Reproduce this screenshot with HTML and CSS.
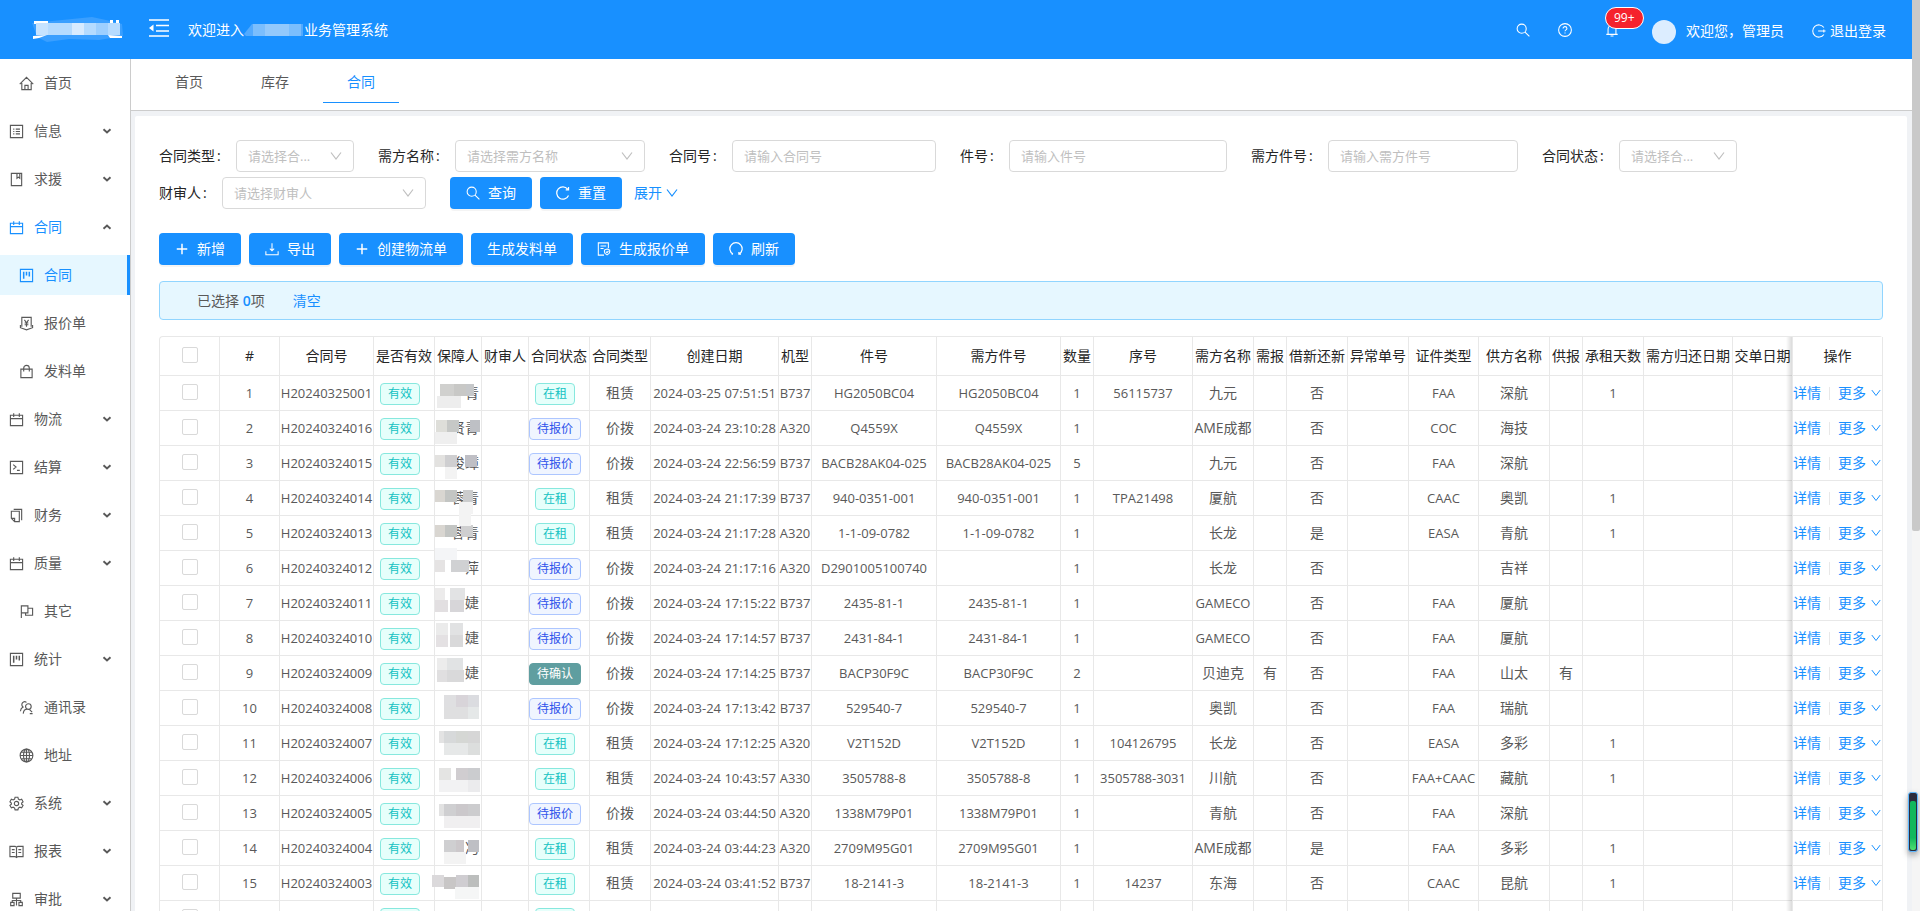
FILE: index.html
```html
<!DOCTYPE html>
<html lang="zh-CN">
<head>
<meta charset="utf-8">
<title>合同 - 业务管理系统</title>
<link rel="stylesheet" href="styles.css">
</head>
<body>
<svg class="sprite" aria-hidden="true">
  <symbol id="home" viewBox="0 0 16 16"><path d="M.8 8.700 8 1.500l7.200 7.200M3 7.500v7h10v-7M6.300 14.500V10h3.400v4.500"/></symbol>
  <symbol id="profile" viewBox="0 0 16 16"><path d="M1.500 1.500h13v13h-13zM4.500 5.500h1.200M4.500 8h1.200M4.500 10.500h1.200M7.200 5.500h4.500M7.200 8h4.500M7.200 10.500h4.500"/></symbol>
  <symbol id="book" viewBox="0 0 16 16"><path d="M2.500 1.500h11v13h-11zM8.500 1.500v5.200l1.500-1.200 1.500 1.200V1.500"/></symbol>
  <symbol id="calendar" viewBox="0 0 16 16"><path d="M1.500 3.500h13v11h-13zM1.500 7h13M5 1.200v4M11 1.200v4"/></symbol>
  <symbol id="project" viewBox="0 0 16 16"><path d="M1.500 1.500h13v13h-13z"/><path stroke-width="1.600" d="M5 4v7.500M8 4v4M11 4v5"/></symbol>
  <symbol id="quote" viewBox="0 0 16 16"><path d="M3 11.500v-10h10v10M1.500 9.500v3L8 14.800l6.500-2.300v-3M5.800 4.200 8 7.200l2.200-3M8 7.200V11.500M6 7.500h4M6 9.300h4"/></symbol>
  <symbol id="bag" viewBox="0 0 16 16"><path d="M2 5.500h12v9H2zM5 8V4.500a3 3 0 0 1 6 0V8"/></symbol>
  <symbol id="code" viewBox="0 0 16 16"><path d="M1.500 1.500h13v13h-13zM4.500 5l3 2.500-3 2.500M8.500 11h3"/></symbol>
  <symbol id="copy" viewBox="0 0 16 16"><path d="M2.500 3.500h8.500v11H6L2.500 11zM2.500 11H6v3.500M5 1.500h8.500V13"/></symbol>
  <symbol id="flag" viewBox="0 0 16 16"><path d="M2.500 15V2h7v7.500h-7M9.500 4.500h5V12H7V9.500"/></symbol>
  <symbol id="contacts" viewBox="0 0 16 16"><circle cx="10" cy="7" r="3"/><path d="M4.500 14.500c.3-3 2-4.700 4-4.800M1.500 12c.2-2.200 1-3.700 2.800-4.500A3 3 0 1 1 8 2.500M11 10l3 3M11.500 14.500h3"/></symbol>
  <symbol id="globe" viewBox="0 0 16 16"><circle cx="8" cy="8" r="6.800"/><ellipse cx="8" cy="8" rx="3.200" ry="6.800"/><path d="M1.200 8h13.600M8 1.200v13.600M2.500 4.500h11M2.500 11.500h11"/></symbol>
  <symbol id="gear" viewBox="0 0 16 16"><circle cx="8" cy="8" r="2.300"/><path d="m6.500 1.300-.5 2-1.500.9-2-.7L1 6.200l1.500 1.300v1.300L1 10.100l1.500 2.500 2-.7 1.500.9.500 2h3l.5-2 1.500-.9 2 .7 1.500-2.500-1.500-1.300V7.500L15 6.200l-1.500-2.700-2 .7-1.500-.9-.5-2z"/></symbol>
  <symbol id="read" viewBox="0 0 16 16"><path d="M1 2.500h5.500L8 3.500l1.500-1H15v11H9.500l-1.500 1-1.500-1H1zM8 3.500v11M3 6h3M3 9h3M10 6h3M10 9h3"/></symbol>
  <symbol id="org" viewBox="0 0 16 16"><path d="M4 1.500h8v5H4zM8 6.500V9M3.500 11V9h9v2M1.800 11h3.600v3.500H1.800zM10.600 11h3.600v3.500h-3.600zM8 9v5.500"/></symbol>
  <symbol id="caret" viewBox="0 0 10 10"><path stroke-width="1.900" d="m1.500 3.200 3.500 3.300 3.500-3.300"/></symbol>
  <symbol id="down" viewBox="0 0 12 12"><path d="m1 2.500 5 6.500 5-6.500"/></symbol>
  <symbol id="search" viewBox="0 0 16 16"><circle cx="6.500" cy="6.500" r="5.200"/><path d="m10.300 10.300 5 5"/></symbol>
  <symbol id="help" viewBox="0 0 16 16"><circle cx="8" cy="8" r="7.300"/><path d="M5.800 6.300c0-2.900 4.400-2.800 4.400 0 0 1.500-2.200 1.500-2.200 3.200M8 10.800v1.300"/></symbol>
  <symbol id="bell" viewBox="0 0 16 16"><path d="M1.500 13h13M3.500 13V7a4.500 4.500 0 0 1 9 0v6M8 1.200v1.300M6.300 14.800h3.400"/></symbol>
  <symbol id="logout" viewBox="0 0 16 16"><path d="M13.600 4A7 7 0 1 0 13.600 12M7 8h8.500M13.500 6.200v3.600"/></symbol>
  <symbol id="fold" viewBox="0 0 20 20"><path stroke-width="1.600" d="M0 2h20M7 7.500h13M7 13h13M0 18h20"/><path stroke="none" fill="currentColor" d="m0 10 4.500-3.500v7z"/></symbol>
  <symbol id="plus" viewBox="0 0 16 16"><path stroke-width="1.700" d="M8 2v12M2 8h12"/></symbol>
  <symbol id="download" viewBox="0 0 16 16"><path d="M8 1.500v8.500M5.500 7.500 8 10l2.500-2.500M1 10.500v4h14v-4"/></symbol>
  <symbol id="fileok" viewBox="0 0 16 16"><path d="M8 15H1.500V1h11.500v6M4 4.500h6.500M4 7.500h3.500M11.500 8l3 1.200v2.300c0 1.600-1.500 2.500-3 3.200-1.500-.7-3-1.600-3-3.200V9.200zM10.200 11l1.200 1.200 1.700-2"/></symbol>
  <symbol id="redo" viewBox="0 0 16 16"><path stroke-width="1.400" d="M14.300 10.800A7 7 0 1 1 13.300 3.600M14.300 1.200v3.200h-3.200"/></symbol>
  <symbol id="reload" viewBox="0 0 16 16"><path stroke-width="1.400" d="M4.500 13.800a7 7 0 1 1 7 0M11.300 11.500v2.500h2.400M4.500 13.800H3"/></symbol>
</svg>

<div class="app">
  <header class="header">
    <div class="logo"><svg width="92" height="26" viewBox="0 0 92 26"><path fill="#3a9fff" d="M0 6 60 0l14 3 16 4 1 12-24 4-30-1-22 3-10-5z"/><path fill="#fff" d="M2 4h14v3H2zM1 19l14-1-8 3-6 1zM78 3h3v3h-3zM84 3h3v3h-3zM76 18l14 1v2H78z"/><path fill="#b5dbff" d="M4 6h84v12H4z"/><path fill="#c6e3ff" d="M4 6h12v12H4z"/><path fill="#d8ebff" d="M40 6h12v12H40z"/><path fill="#9dcfff" d="M64 6h12v12H64z"/></svg></div>
    <button class="fold" aria-label="收起菜单"><svg class="ic ic20"><use href="#fold"/></svg></button>
    <div class="welcome">欢迎进入<svg width="60" height="14" viewBox="0 0 60 14"><path fill="#52aaff" d="M0 11 8 1h51v12H2z"/><path fill="#93c9fc" d="M9 1h48v12H9z"/><path fill="#7bbefd" d="M9 1h12v12H9zM45 1h12v12H45z"/></svg>业务管理系统</div>
    <nav class="tools">
      <button class="tool" aria-label="搜索"><svg class="ic"><use href="#search"/></svg></button>
      <button class="tool" aria-label="帮助"><svg class="ic ic14"><use href="#help"/></svg></button>
      <button class="tool bell" aria-label="通知"><svg class="ic ic14"><use href="#bell"/></svg><span class="badge">99+</span></button>
      <span class="avatar"></span>
      <span class="user">欢迎您，管理员</span>
      <a class="logout" href="#"><svg class="ic ic14"><use href="#logout"/></svg>退出登录</a>
    </nav>
  </header>

  <aside class="side" id="side"></aside>

  <main class="main">
    <nav class="tabs"><a href="#">首页</a><a href="#">库存</a><a href="#" class="on">合同</a></nav>
    <section class="card">
      <form class="filters">
        <div class="field"><label for="f1">合同类型</label><span class="select w118"><select id="f1"><option>请选择合...</option></select><svg class="ic ic12"><use href="#down"/></svg></span></div>
        <div class="field"><label for="f2">需方名称</label><span class="select w190"><select id="f2"><option>请选择需方名称</option></select><svg class="ic ic12"><use href="#down"/></svg></span></div>
        <div class="field"><label for="f3">合同号</label><input class="w204" id="f3" placeholder="请输入合同号"></div>
        <div class="field"><label for="f4">件号</label><input class="w218" id="f4" placeholder="请输入件号"></div>
        <div class="field"><label for="f5">需方件号</label><input class="w190" id="f5" placeholder="请输入需方件号"></div>
        <div class="field"><label for="f6">合同状态</label><span class="select w118"><select id="f6"><option>请选择合...</option></select><svg class="ic ic12"><use href="#down"/></svg></span></div>
        <div class="field"><label for="f7">财审人</label><span class="select w204"><select id="f7"><option>请选择财审人</option></select><svg class="ic ic12"><use href="#down"/></svg></span></div>
        <div class="acts">
          <button type="button" class="btn"><svg class="ic ic14"><use href="#search"/></svg>查询</button>
          <button type="button" class="btn"><svg class="ic ic14"><use href="#redo"/></svg>重置</button>
          <a href="#" class="expand">展开<svg class="ic ic12"><use href="#down"/></svg></a>
        </div>
      </form>
      <div class="acts bar">
        <button class="btn"><svg class="ic ic14"><use href="#plus"/></svg>新增</button>
        <button class="btn"><svg class="ic ic14"><use href="#download"/></svg>导出</button>
        <button class="btn"><svg class="ic ic14"><use href="#plus"/></svg>创建物流单</button>
        <button class="btn">生成发料单</button>
        <button class="btn"><svg class="ic ic14"><use href="#fileok"/></svg>生成报价单</button>
        <button class="btn"><svg class="ic ic14"><use href="#reload"/></svg>刷新</button>
      </div>
      <div class="alert"><span>已选择 <b>0</b>项</span><a href="#">清空</a></div>
      <table class="grid"><colgroup id="cols"></colgroup><thead><tr id="head"></tr></thead><tbody id="rows"></tbody></table>
    </section>
  </main>
  <div class="scroll"><div class="thumb"></div></div>
  <div class="meter"><div class="level"></div></div>
</div>
<script src="app.js"></script>
</body>
</html>
```
FILE: styles.css
```css
* { box-sizing: border-box; }
body {
  margin: 0;
  font: 14px/22px "Open Sans", "Noto Sans CJK SC", sans-serif;
  color: #595959;
  background: #f0f2f5;
}
a { color: #1890ff; text-decoration: none; }
button, input, select { font: inherit; }
.sprite { position: absolute; width: 0; height: 0; }
.ic { width: 16px; height: 16px; fill: none; stroke: currentColor; stroke-width: 1.2; flex: none; }
.ic10 { width: 10px; height: 10px; }
.ic12 { width: 12px; height: 12px; }
.ic14 { width: 14px; height: 14px; }
.ic20 { width: 20px; height: 20px; }

.app {
  display: grid;
  grid-template: 59px 1fr / 131px 1fr 8px;
  height: 100vh;
  overflow: hidden;
}

/* header */
.header {
  grid-column: 1 / 3;
  display: flex;
  align-items: center;
  background: #1890ff;
  color: #fff;
}
.logo { width: 149px; padding-left: 32px; }
.logo svg, .welcome svg { display: block; }
.fold { border: 0; padding: 0 0 4px; background: none; color: #fff; display: flex; }
.welcome { display: flex; align-items: center; padding-left: 19px; }
.tools { margin-left: auto; display: flex; align-items: center; padding-right: 26px; }
.tool { border: 0; padding: 0; width: 28px; margin-right: 14px; background: none; color: #fff; display: flex; justify-content: center; }
.tool .ic { width: 14px; height: 14px; }
.bell { position: relative; width: 36px; margin-left: 1px; }
.badge {
  position: absolute;
  left: 11px;
  top: -16px;
  height: 22px;
  padding: 0 8px;
  border: 1px solid #fff;
  border-radius: 11px;
  background: #f5222d;
  font-size: 12px;
  line-height: 20px;
}
.avatar { width: 24px; height: 24px; border-radius: 50%; background: #dcedff; margin: 4px 10px 0 8px; }
.user { margin-top: 2px; }
.logout { display: flex; align-items: center; gap: 4px; margin: 2px 0 0 28px; color: #fff; }

/* sidebar */
.side {
  display: flex;
  flex-direction: column;
  gap: 8px;
  padding-top: 4px;
  background: #fff;
  border-right: 1px solid #ccc;
  overflow: hidden;
}
.side a { display: flex; align-items: center; flex: none; height: 40px; padding: 0 18px 0 9px; color: #595959; }
.side a .ic { width: 15px; height: 15px; margin-right: 10px; }
.side a .ic10 { width: 10px; height: 10px; margin: 0 0 0 auto; }
.side .sub { padding-left: 19px; }
.side .open { color: #1890ff; }
.side .open .ic10 { color: #595959; transform: rotate(180deg); }
.side .sel { color: #1890ff; background: #e6f7ff; border-right: 3px solid #1890ff; }

/* main */
.main { display: flex; flex-direction: column; overflow: hidden; }
.tabs { display: flex; flex: none; gap: 10px; height: 52px; padding-left: 20px; background: #fff; border-bottom: 1px solid #ccc; }
.tabs a { height: 44px; padding: 0 24px; line-height: 46px; color: #595959; }
.tabs .on { color: #1890ff; border-bottom: 1px solid #1890ff; }
.card { flex: 1; margin: 5px 5px 0 4px; padding: 24px; background: #fff; border-radius: 2px 2px 0 0; overflow: hidden; }

.filters { display: flex; flex-wrap: wrap; gap: 5px 24px; }
.field { display: flex; align-items: center; }
.field label { color: #262626; white-space: nowrap; }
.field label::after { content: ":"; display: inline-block; width: 5px; margin: 0 14px 0 2px; }
.field input, .select select {
  display: block;
  width: 100%;
  height: 32px;
  padding: 0 11px;
  border: 1px solid #d9d9d9;
  border-radius: 4px;
  background: #fff;
  color: #bfbfbf;
  font-size: 13px;
  appearance: none;
}
.field ::placeholder { color: #bfbfbf; }
.select { position: relative; }
.select .ic { position: absolute; right: 12px; top: 10px; color: #bfbfbf; }
.field .w118 { width: 118px; }
.field .w190 { width: 190px; }
.field .w204 { width: 204px; }
.field .w218 { width: 218px; }

.acts { display: flex; align-items: center; gap: 8px; }
.bar { margin-top: 24px; }
.btn {
  display: flex;
  align-items: center;
  gap: 8px;
  height: 32px;
  padding: 0 16px;
  border: 0;
  border-radius: 4px;
  background: #1890ff;
  color: #fff;
  box-shadow: 0 2px 0 rgba(0, 0, 0, .045);
}
.expand { display: flex; align-items: center; gap: 4px; margin-left: 4px; }

.alert {
  display: flex;
  gap: 28px;
  margin: 16px 0;
  padding: 8px 37px;
  border: 1px solid #91d5ff;
  border-radius: 4px;
  background: #e6f7ff;
  line-height: 21px;
}
.alert b { color: #1890ff; font-weight: 600; }

/* table */
.grid {
  width: 100%;
  table-layout: fixed;
  border-collapse: separate;
  border-spacing: 0;
  border: 1px solid #e8e8e8;
  border-width: 1px 0 0 1px;
  border-radius: 4px 4px 0 0;
  text-align: center;
}
.grid th, .grid td {
  height: 35px;
  padding: 0;
  border: 1px solid #e8e8e8;
  border-width: 0 1px 1px 0;
  white-space: nowrap;
}
.grid th { height: 39px; font-weight: 400; color: #262626; }
.grid .num { font-size: 13px; }
.grid input {
  display: block;
  width: 16px;
  height: 16px;
  margin: 0 auto 2px;
  border: 1px solid #d9d9d9;
  border-radius: 2px;
  background: #fff;
  appearance: none;
}
.grid .name { position: relative; text-align: right; padding-right: 2px; }
.mosaic { position: absolute; left: 0; top: 0; width: 46px; height: 34px; }
.grid .fix { position: relative; background: #fff; }
.grid .fix::before {
  content: "";
  position: absolute;
  top: 0;
  bottom: -1px;
  left: -7px;
  width: 6px;
  background: linear-gradient(to left, rgba(0, 0, 0, .14), rgba(0, 0, 0, 0));
}
.ops { display: flex; align-items: center; justify-content: space-between; padding-right: 1px; }
.ops i { width: 1px; height: 13px; background: #e8e8e8; }
.ops .more { display: flex; align-items: center; gap: 5px; }
.tag {
  display: inline-block;
  margin-right: 8px;
  padding: 0 7px;
  border: 1px solid #87e8de;
  border-radius: 4px;
  background: #e6fffb;
  color: #13c2c2;
  font-size: 12px;
  line-height: 20px;
  vertical-align: middle;
}
.blue { color: #2f54eb; background: #f0f5ff; border-color: #adc6ff; }
.solid { color: #fff; background: #5f9ea0; border-color: #5f9ea0; }

/* page scroll and side meter */
.scroll { grid-column: 3; grid-row: 1 / 3; background: #f5f5f5; }
.thumb { height: 58.3%; background: #c9c9c9; border-radius: 0 0 2px 2px; }
.meter {
  position: fixed;
  right: 2px;
  bottom: 59px;
  width: 10px;
  height: 60px;
  padding: 8px 1px 1px;
  border: 1px solid #5fb8ff;
  border-radius: 3px;
  background: #2c2c3c;
  box-shadow: 0 3px 6px rgba(0, 0, 0, .35);
}
.level { height: 100%; border-radius: 2px; background: linear-gradient(#12b85c 75%, #4fe070); }
```
FILE: app.js
```js
const icon = (id, cls = "") => `<svg class="ic ${cls}"><use href="#${id}"/></svg>`;

const menu = [
  ["home", "首页", "sub"], ["profile", "信息", "group"], ["book", "求援", "group"],
  ["calendar", "合同", "group open"], ["project", "合同", "sub sel"], ["quote", "报价单", "sub"],
  ["bag", "发料单", "sub"], ["calendar", "物流", "group"], ["code", "结算", "group"],
  ["copy", "财务", "group"], ["calendar", "质量", "group"], ["flag", "其它", "sub"],
  ["project", "统计", "group"], ["contacts", "通讯录", "sub"], ["globe", "地址", "sub"],
  ["gear", "系统", "group"], ["read", "报表", "group"], ["org", "审批", "group"]
];
document.getElementById("side").innerHTML = menu.map(([ic, text, cls]) =>
  `<a href="#" class="${cls}">${icon(ic)}${text}${cls.startsWith("group") ? icon("caret", "ic10") : ""}</a>`).join("");

const columns = [
  ["", 60], ["#", 60], ["合同号", 94], ["是否有效", 61], ["保障人", 47], ["财审人", 47],
  ["合同状态", 61], ["合同类型", 61], ["创建日期", 128], ["机型", 33], ["件号", 125],
  ["需方件号", 124], ["数量", 33], ["序号", 99], ["需方名称", 61], ["需报", 33],
  ["借新还新", 61], ["异常单号", 61], ["证件类型", 70], ["供方名称", 71], ["供报", 33],
  ["承租天数", 61], ["需方归还日期", 89], ["交单日期", 60], ["操作", 90]
];
document.getElementById("cols").innerHTML = columns.map(c => `<col style="width:${c[1]}px">`).join("");
const check = label => `<input type="checkbox" aria-label="${label}">`;
document.getElementById("head").innerHTML = columns.map(([t], i) =>
  `<th class="${i === 24 ? "fix" : ""}">${i ? t : check("全选")}</th>`).join("");

const Z = "在租", D = "待报价", R = "租赁", J = "价拨";
// no, status, type, time, model, part, buyer part, qty, serial, buyer, buyer quote, swap, cert, supplier, supplier quote, days
const data = [
  ["25001", Z, R, "25 07:51:51", "B737", "HG2050BC04", "HG2050BC04", 1, "56115737", "九元", "", "否", "FAA", "深航", "", 1],
  ["24016", D, J, "24 23:10:28", "A320", "Q4559X", "Q4559X", 1, "", "AME成都", "", "否", "COC", "海技", "", ""],
  ["24015", D, J, "24 22:56:59", "B737", "BACB28AK04-025", "BACB28AK04-025", 5, "", "九元", "", "否", "FAA", "深航", "", ""],
  ["24014", Z, R, "24 21:17:39", "B737", "940-0351-001", "940-0351-001", 1, "TPA21498", "厦航", "", "否", "CAAC", "奥凯", "", 1],
  ["24013", Z, R, "24 21:17:28", "A320", "1-1-09-0782", "1-1-09-0782", 1, "", "长龙", "", "是", "EASA", "青航", "", 1],
  ["24012", D, J, "24 21:17:16", "A320", "D2901005100740", "", 1, "", "长龙", "", "否", "", "吉祥", "", ""],
  ["24011", D, J, "24 17:15:22", "B737", "2435-81-1", "2435-81-1", 1, "", "GAMECO", "", "否", "FAA", "厦航", "", ""],
  ["24010", D, J, "24 17:14:57", "B737", "2431-84-1", "2431-84-1", 1, "", "GAMECO", "", "否", "FAA", "厦航", "", ""],
  ["24009", "待确认", J, "24 17:14:25", "B737", "BACP30F9C", "BACP30F9C", 2, "", "贝迪克", "有", "否", "FAA", "山太", "有", ""],
  ["24008", D, J, "24 17:13:42", "B737", "529540-7", "529540-7", 1, "", "奥凯", "", "否", "FAA", "瑞航", "", ""],
  ["24007", Z, R, "24 17:12:25", "A320", "V2T152D", "V2T152D", 1, "104126795", "长龙", "", "否", "EASA", "多彩", "", 1],
  ["24006", Z, R, "24 10:43:57", "A330", "3505788-8", "3505788-8", 1, "3505788-3031", "川航", "", "否", "FAA+CAAC", "藏航", "", 1],
  ["24005", D, J, "24 03:44:50", "A320", "1338M79P01", "1338M79P01", 1, "", "青航", "", "否", "FAA", "深航", "", ""],
  ["24004", Z, R, "24 03:44:23", "A320", "2709M95G01", "2709M95G01", 1, "", "AME成都", "", "是", "FAA", "多彩", "", 1],
  ["24003", Z, R, "24 03:41:52", "B737", "18-2141-3", "18-2141-3", 1, "14237", "东海", "", "否", "CAAC", "昆航", "", 1]
];

// visible part of each masked name, then mosaic blocks as [x, y, width, colour]
const names = [
  ["青", [[5, 8, 14, "#d0d0ce"], [19, 8, 12, "#c8c8c6"], [31, 8, 8, "#c6c8ca"], [2, 20, 24, "#ededed"]]],
  ["贤青", [[1, 9, 11, "#deded9"], [12, 9, 12, "#c6c8c6"], [35, 9, 10, "#bec0c5"], [0, 21, 22, "#efefef"]]],
  ["俊璋", [[0, 9, 10, "#e3e2e0"], [10, 9, 12, "#cfcfd1"], [30, 9, 12, "#bfbfc5"], [10, 21, 12, "#f3f3f3"]]],
  ["蓉青", [[0, 9, 10, "#d9d6d1"], [10, 9, 12, "#c3c5c3"], [28, 9, 10, "#cbcccd"], [24, 21, 14, "#f3f3f3"]]],
  ["蓉青", [[0, 9, 10, "#d9d6d1"], [10, 9, 12, "#c3c5c3"], [26, 9, 12, "#cfcfd0"], [24, -2, 12, "#f3f3f3"]]],
  ["萍", [[0, 9, 10, "#e5e3e3"], [16, 9, 18, "#d0d1d3"], [0, -3, 22, "#f4f5f7"]]],
  ["婕", [[0, 2, 10, "#ecebeb"], [15, 2, 15, "#e2e3e4"], [0, 14, 13, "#e2dfe1"], [15, 14, 14, "#d7d6d9"]]],
  ["婕", [[1, 2, 12, "#ebebeb"], [15, 2, 13, "#e1e2e3"], [1, 14, 12, "#e4e1e3"], [15, 14, 13, "#d9d9da"]]],
  ["婕", [[2, 2, 10, "#ececec"], [12, 2, 16, "#e1e3e4"], [2, 14, 10, "#e0dfe0"], [12, 14, 17, "#d9d9da"]]],
  ["", [[9, 4, 12, "#dfdfe1"], [21, 4, 12, "#d8d4d9"], [33, 4, 11, "#dbdce0"], [9, 16, 24, "#dfdfe0"], [33, 16, 11, "#e5e8e8"]]],
  ["", [[4, 5, 5, "#e3e3e3"], [9, 5, 12, "#d7d9da"], [21, 5, 12, "#d5d7d4"], [33, 5, 12, "#d6d6d6"], [9, 17, 24, "#e6e8e8"], [33, 17, 12, "#dcdedd"]]],
  ["", [[4, 7, 12, "#e4e4e3"], [21, 7, 12, "#d0cdd0"], [33, 7, 12, "#cbcccf"], [4, 19, 29, "#f2f2f3"], [33, 19, 12, "#ebebed"]]],
  ["", [[4, 8, 5, "#e2e2e2"], [9, 8, 12, "#cfcfd1"], [21, 8, 12, "#cbc8cb"], [33, 8, 12, "#ccccce"], [9, 20, 36, "#f0eff0"]]],
  ["冯　　", [[9, 9, 12, "#cfcfd1"], [21, 9, 8, "#ccc8cb"], [33, 9, 11, "#bebfc4"], [9, 21, 22, "#f3f3f3"]]],
  ["", [[-3, 9, 12, "#dbd9db"], [9, 11, 12, "#c8c6c6"], [21, 9, 12, "#cfcdd1"], [33, 9, 11, "#bcbebd"], [20, 21, 24, "#f5f6f6"]]]
];
const mosaic = blocks => `<svg class="mosaic" viewBox="0 0 46 34" overflow="visible">${blocks.map(([x, y, w, c]) =>
  `<rect x="${x}" y="${y}" width="${w}" height="12" fill="${c}"/>`).join("")}</svg>`;

const td = (v, cls) => `<td class="${cls || (/^[\x00-\x7f]*$/.test(v) ? "num" : "")}">${v}</td>`;
const tag = (t, cls = "") => `<td><span class="tag ${cls}">${t}</span></td>`;
const statusClass = { [D]: "blue", "待确认": "solid" };
const ops = `<td class="fix"><div class="ops"><a href="#">详情</a><i></i><a href="#" class="more">更多${icon("down", "ic10")}</a></div></td>`;

data.push(["24002", Z, R, "24 03:40:11", "B737", "", "", 1, "", "", "", "", "", "", "", ""]);
document.getElementById("rows").innerHTML = data.map((r, i) => {
  const [visible, blocks] = names[i] || ["", []];
  return `<tr><td>${check("选择第" + (i + 1) + "行")}</td>` + td(i + 1) + td("H202403" + r[0]) + tag("有效") +
    `<td class="name">${visible}${mosaic(blocks)}</td>` + td("") + tag(r[1], statusClass[r[1]]) + td(r[2]) +
    td("2024-03-" + r[3]) + r.slice(4, 12).map(v => td(v)).join("") + td("") +
    r.slice(12, 16).map(v => td(v)).join("") + td("") + td("") + ops + "</tr>";
}).join("");
```
